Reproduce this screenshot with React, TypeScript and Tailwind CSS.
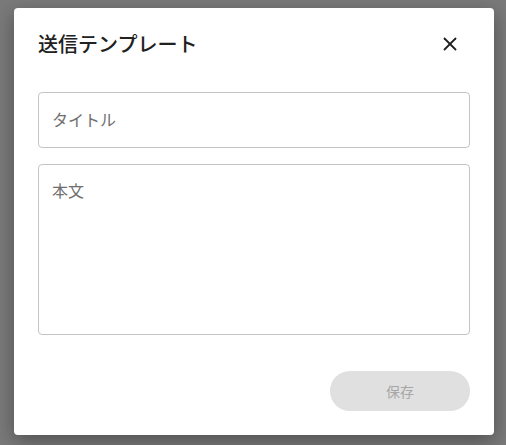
import { X } from 'lucide-react';

export default function App() {
  return (
    <div
      className="w-[506px] h-[445px] bg-[#7a7a7a] pt-2 pl-[14px]"
      style={{ fontFamily: '"Noto Sans CJK JP", "Noto Sans", sans-serif' }}
    >
      <div className="w-[480px] h-[427px] bg-white rounded-[4px] shadow-[0_6px_20px_rgba(0,0,0,0.35)] px-6 pt-5 flex flex-col">
        <div className="flex items-center justify-between h-8">
          <h1 className="text-[20px] leading-8 font-medium text-[#212121]">送信テンプレート</h1>
          <button className="w-10 h-10 flex items-center justify-center text-[#212121]">
            <X size={22} strokeWidth={2} />
          </button>
        </div>

        <div className="mt-8 h-[56px] border border-[#c4c4c4] rounded-[4px] px-[13px] pb-[2px] flex items-center">
          <span className="text-[16px] text-[#6f6f6f]">タイトル</span>
        </div>

        <div className="mt-4 h-[171px] border border-[#c4c4c4] rounded-[4px] px-[13px] pt-[13px]">
          <span className="text-[16px] text-[#6f6f6f]">本文</span>
        </div>

        <div className="mt-9 flex justify-end">
          <button className="w-[140px] h-[40px] rounded-full bg-[#e0e0e0] text-[14px] text-[#a6a6a6]">
            保存
          </button>
        </div>
      </div>
    </div>
  );
}
